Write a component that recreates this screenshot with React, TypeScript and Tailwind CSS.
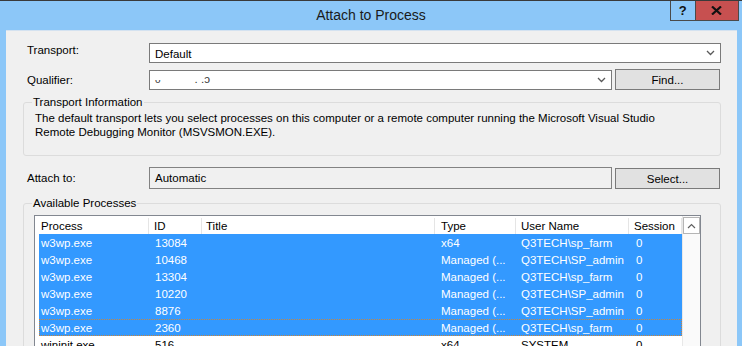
import React from "react";

const rows: { p: string; id: string; t: string; u: string; s: string; sel: boolean; focus?: boolean }[] = [
  { p: "w3wp.exe", id: "13084", t: "x64", u: "Q3TECH\\sp_farm", s: "0", sel: true },
  { p: "w3wp.exe", id: "10468", t: "Managed (...", u: "Q3TECH\\SP_admin", s: "0", sel: true },
  { p: "w3wp.exe", id: "13304", t: "Managed (...", u: "Q3TECH\\sp_farm", s: "0", sel: true },
  { p: "w3wp.exe", id: "10220", t: "Managed (...", u: "Q3TECH\\SP_admin", s: "0", sel: true },
  { p: "w3wp.exe", id: "8876", t: "Managed (...", u: "Q3TECH\\SP_admin", s: "0", sel: true },
  { p: "w3wp.exe", id: "2360", t: "Managed (...", u: "Q3TECH\\sp_farm", s: "0", sel: true, focus: true },
  { p: "wininit.exe", id: "516", t: "x64", u: "SYSTEM", s: "0", sel: false },
];

function Chevron() {
  return (
    <svg width="9" height="6" viewBox="0 0 9 6" className="shrink-0">
      <path d="M1 1 L4.5 4.5 L8 1" fill="none" stroke="#5a5a5a" strokeWidth="1.3" />
    </svg>
  );
}

export default function App() {
  return (
    <div className="w-[742px] h-[346px] overflow-hidden flex flex-col bg-[#8cc7f8] border-t border-[#3a3a3a] font-['Liberation_Sans',Arial,sans-serif] text-[11.5px] text-black leading-[16px]">
      {/* title bar */}
      <div className="h-[29px] grid grid-cols-[72px_1fr_72px] shrink-0">
        <div />
        <div className="flex items-center justify-center text-[14px] text-[#1a1a1a] pb-[1px]">Attach to Process</div>
        <div className="flex justify-end pr-[3px] items-start">
          <div className="w-[26px] h-[20px] border border-t-0 border-[#4a4a4a] flex items-center justify-center font-bold text-[13px] text-[#111]">?</div>
          <div className="w-[44px] h-[20px] border border-t-0 border-l-0 border-[#4a4a4a] bg-[#c75050] flex items-center justify-center">
            <svg width="11" height="9" viewBox="0 0 11 9">
              <path d="M1 0.5 L10 8.5 M10 0.5 L1 8.5" stroke="#111" strokeWidth="2.2" />
            </svg>
          </div>
        </div>
      </div>

      {/* client */}
      <div className="flex-1 ml-[6px] mr-[5px] bg-[#f0f0f0] border-t border-[#d4e2f0] flex flex-col pl-[17px]">
        {/* Transport */}
        <div className="mt-[12px] flex items-center h-[20px]">
          <div className="w-[126px] pl-[4px] mb-[6px]">Transport:</div>
          <div className="w-[572px] h-[20px] bg-white border border-[#7a7a7a] flex items-center pl-[5px] pr-[5px]">
            <span className="flex-1 pt-[1px]">Default</span>
            <Chevron />
          </div>
        </div>
        {/* Qualifier */}
        <div className="mt-[6px] flex items-center h-[21px]">
          <div className="w-[126px] pl-[4px]">Qualifier:</div>
          <div className="w-[463px] h-[20px] bg-white border border-[#7a7a7a] flex items-center pl-[5px] pr-[5px]">
            <span className="flex-1 text-[#333]">
              <span className="text-[10px]">ᴗ</span>
              <span className="ml-[34px]">. .</span>
              <span>ͻ</span>
            </span>
            <Chevron />
          </div>
          <div className="ml-[3px] w-[105px] h-[21px] bg-[#e1e1e1] border border-[#7a7a7a] flex items-center justify-center">Find...</div>
        </div>

        {/* Transport Information */}
        <fieldset className="mt-[4px] w-[698px] h-[62px] border border-[#dcdcdc] rounded-[3px] pl-[11px]">
          <legend className="ml-[-3px] px-[1px]">Transport Information</legend>
          <div className="leading-[14px] pt-[1px]">
            The default transport lets you select processes on this computer or a remote computer running the Microsoft Visual Studio
            <br />
            Remote Debugging Monitor (MSVSMON.EXE).
          </div>
        </fieldset>

        {/* Attach to */}
        <div className="mt-[11px] flex items-end">
          <div className="w-[126px] pl-[4px] self-center">Attach to:</div>
          <div className="w-[463px] h-[22px] border border-[#828282] flex items-center pl-[5px]">Automatic</div>
          <div className="ml-[3px] w-[105px] h-[21px] bg-[#e1e1e1] border border-[#7a7a7a] flex items-center justify-center">Select...</div>
        </div>

        {/* Available Processes */}
        <fieldset className="mt-[6px] w-[698px] flex-1 border border-[#dcdcdc] rounded-[3px] pl-[10px]">
          <legend className="ml-[-2px] px-[1px]">Available Processes</legend>
          <div className="mt-[4px] w-[667px] h-[200px] border border-[#828790] bg-white flex">
            <div className="w-[647px] flex flex-col">
              {/* header */}
              <div className="h-[18px] flex shrink-0 pt-[2px]">
                <div className="w-[114px] pl-[6px] border-r border-[#e5e5e5] flex items-center">Process</div>
                <div className="w-[53px] pl-[5px] border-r border-[#e5e5e5] flex items-center">ID</div>
                <div className="w-[233px] pl-[4px] border-r border-[#e5e5e5] flex items-center">Title</div>
                <div className="w-[81px] pl-[6px] border-r border-[#e5e5e5] flex items-center">Type</div>
                <div className="w-[113px] pl-[5px] border-r border-[#e5e5e5] flex items-center">User Name</div>
                <div className="w-[53px] pl-[5px] border-r border-[#e5e5e5] flex items-center">Session</div>
              </div>
              {rows.map((r, i) => (
                <div
                  key={i}
                  className={
                    "h-[17px] flex ml-[4px] shrink-0 " +
                    (r.sel ? "bg-[#3399ff] text-white " : "text-black ") +
                    (r.focus ? "outline outline-1 outline-dotted outline-offset-[-1px] outline-[#c8843c]" : "")
                  }
                >
                  <div className="w-[110px] pl-[2px] flex items-center">{r.p}</div>
                  <div className="w-[53px] pl-[6px] flex items-center">{r.id}</div>
                  <div className="w-[233px] flex items-center"></div>
                  <div className="w-[81px] pl-[6px] flex items-center whitespace-nowrap">{r.t}</div>
                  <div className="w-[113px] pl-[5px] flex items-center whitespace-nowrap">{r.u}</div>
                  <div className="w-[53px] pl-[7px] flex items-center">{r.s}</div>
                </div>
              ))}
            </div>
            {/* scrollbar */}
            <div className="flex-1 flex flex-col bg-[#fafafa] border-l border-[#e8e8e8]">
              <div className="h-[17px] mt-[1px] border border-[#b5b5b5] bg-white flex items-center justify-center">
                <svg width="9" height="6" viewBox="0 0 9 6">
                  <path d="M1 5 L4.5 1.5 L8 5" fill="none" stroke="#606060" strokeWidth="1.2" />
                </svg>
              </div>
            </div>
          </div>
        </fieldset>
      </div>
    </div>
  );
}
